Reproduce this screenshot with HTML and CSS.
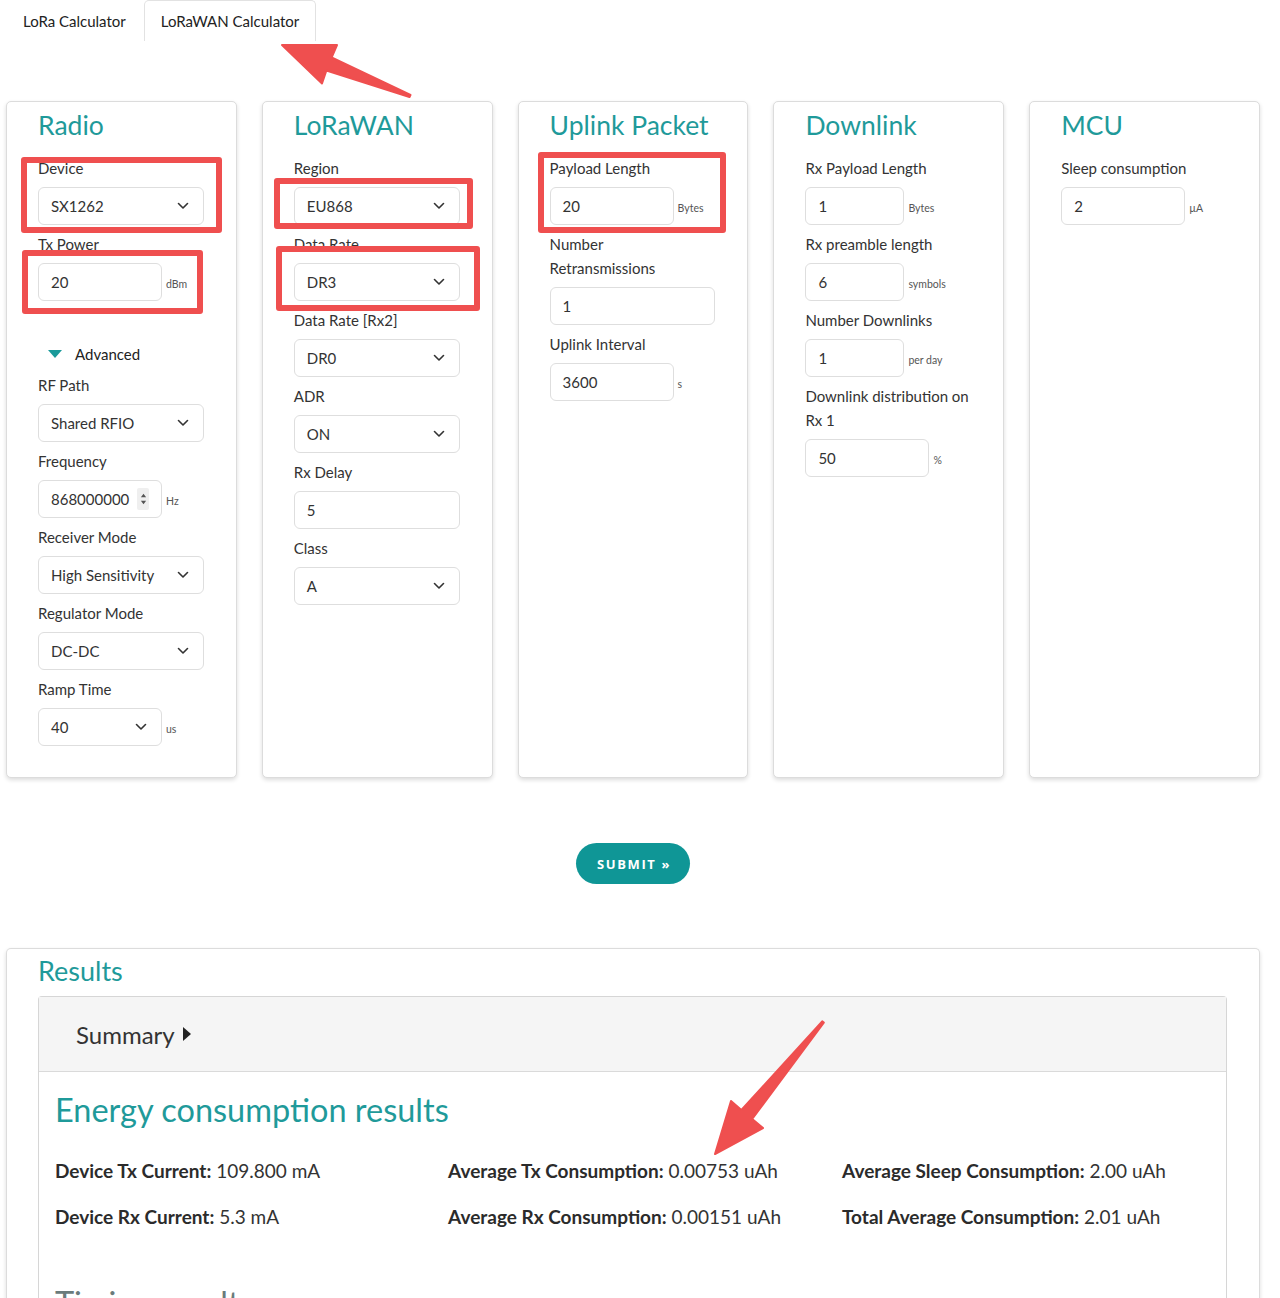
FILE: index.html
```html
<!DOCTYPE html>
<html lang="en">
<head>
<meta charset="utf-8">
<title>LoRaWAN Calculator</title>
<link rel="stylesheet" href="styles.css">
</head>
<body>
<div class="page">
  <nav class="tabs">
    <a class="tab">LoRa Calculator</a>
    <a class="tab active">LoRaWAN Calculator</a>
  </nav>

  <div class="cards">
    <section class="card">
      <h2 class="card-title">Radio</h2>
      <div class="field">
        <label>Device</label>
        <div class="select">SX1262<svg class="chev" viewBox="0 0 12 8"><path d="M1.5 1.5 6 6l4.5-4.5"/></svg></div>
      </div>
      <div class="field">
        <label>Tx Power</label>
        <div class="group"><div class="input w124">20</div><span class="unit">dBm</span></div>
      </div>
      <div class="advanced"><svg class="tri" viewBox="0 0 14 9"><path d="M0 0h14L7 8z"/></svg><span>Advanced</span></div>
      <div class="field">
        <label>RF Path</label>
        <div class="select">Shared RFIO<svg class="chev" viewBox="0 0 12 8"><path d="M1.5 1.5 6 6l4.5-4.5"/></svg></div>
      </div>
      <div class="field">
        <label>Frequency</label>
        <div class="group"><div class="input w124 spin-input">868000000<span class="spinner"><svg viewBox="0 0 8 16"><path d="M1 6l3-4 3 4zM1 10l3 4 3-4z"/></svg></span></div><span class="unit">Hz</span></div>
      </div>
      <div class="field">
        <label>Receiver Mode</label>
        <div class="select">High Sensitivity<svg class="chev" viewBox="0 0 12 8"><path d="M1.5 1.5 6 6l4.5-4.5"/></svg></div>
      </div>
      <div class="field">
        <label>Regulator Mode</label>
        <div class="select">DC-DC<svg class="chev" viewBox="0 0 12 8"><path d="M1.5 1.5 6 6l4.5-4.5"/></svg></div>
      </div>
      <div class="field last">
        <label>Ramp Time</label>
        <div class="group"><div class="select w124">40<svg class="chev" viewBox="0 0 12 8"><path d="M1.5 1.5 6 6l4.5-4.5"/></svg></div><span class="unit">us</span></div>
      </div>
    </section>

    <section class="card">
      <h2 class="card-title">LoRaWAN</h2>
      <div class="field">
        <label>Region</label>
        <div class="select">EU868<svg class="chev" viewBox="0 0 12 8"><path d="M1.5 1.5 6 6l4.5-4.5"/></svg></div>
      </div>
      <div class="field">
        <label>Data Rate</label>
        <div class="select">DR3<svg class="chev" viewBox="0 0 12 8"><path d="M1.5 1.5 6 6l4.5-4.5"/></svg></div>
      </div>
      <div class="field">
        <label>Data Rate [Rx2]</label>
        <div class="select">DR0<svg class="chev" viewBox="0 0 12 8"><path d="M1.5 1.5 6 6l4.5-4.5"/></svg></div>
      </div>
      <div class="field">
        <label>ADR</label>
        <div class="select">ON<svg class="chev" viewBox="0 0 12 8"><path d="M1.5 1.5 6 6l4.5-4.5"/></svg></div>
      </div>
      <div class="field">
        <label>Rx Delay</label>
        <div class="input">5</div>
      </div>
      <div class="field">
        <label>Class</label>
        <div class="select">A<svg class="chev" viewBox="0 0 12 8"><path d="M1.5 1.5 6 6l4.5-4.5"/></svg></div>
      </div>
    </section>

    <section class="card">
      <h2 class="card-title">Uplink Packet</h2>
      <div class="field">
        <label>Payload Length</label>
        <div class="group"><div class="input w124">20</div><span class="unit">Bytes</span></div>
      </div>
      <div class="field">
        <label>Number<br>Retransmissions</label>
        <div class="input">1</div>
      </div>
      <div class="field">
        <label>Uplink Interval</label>
        <div class="group"><div class="input w124">3600</div><span class="unit">s</span></div>
      </div>
    </section>

    <section class="card">
      <h2 class="card-title">Downlink</h2>
      <div class="field">
        <label>Rx Payload Length</label>
        <div class="group"><div class="input w99">1</div><span class="unit">Bytes</span></div>
      </div>
      <div class="field">
        <label>Rx preamble length</label>
        <div class="group"><div class="input w99">6</div><span class="unit">symbols</span></div>
      </div>
      <div class="field">
        <label>Number Downlinks</label>
        <div class="group"><div class="input w99">1</div><span class="unit">per day</span></div>
      </div>
      <div class="field">
        <label>Downlink distribution on<br>Rx 1</label>
        <div class="group"><div class="input w124">50</div><span class="unit">%</span></div>
      </div>
    </section>

    <section class="card">
      <h2 class="card-title">MCU</h2>
      <div class="field">
        <label>Sleep consumption</label>
        <div class="group"><div class="input w124">2</div><span class="unit">µA</span></div>
      </div>
    </section>
  </div>

  <div class="submit-row">
    <button class="submit">SUBMIT »</button>
  </div>

  <section class="card results">
    <h2 class="card-title">Results</h2>
    <div class="panel">
      <div class="panel-head">Summary <svg class="play" viewBox="0 0 8 14"><path d="M0 0l8 7-8 7z"/></svg></div>
      <div class="panel-body">
        <h3 class="sub-title">Energy consumption results</h3>
        <div class="stats">
          <p><b>Device Tx Current:</b> 109.800 mA</p>
          <p><b>Average Tx Consumption:</b> 0.00753 uAh</p>
          <p><b>Average Sleep Consumption:</b> 2.00 uAh</p>
          <p><b>Device Rx Current:</b> 5.3 mA</p>
          <p><b>Average Rx Consumption:</b> 0.00151 uAh</p>
          <p><b>Total Average Consumption:</b> 2.01 uAh</p>
        </div>
        <h3 class="sub-title next">Timing results</h3>
      </div>
    </div>
  </section>

  <div class="annotations">
    <div class="mark m1"></div>
    <div class="mark m2"></div>
    <div class="mark m3"></div>
    <div class="mark m4"></div>
    <div class="mark m5"></div>
    <svg class="arrows" viewBox="0 0 1280 1298">
      <polygon points="282,45 337,45 331.6,57.5 410.5,95 409.5,97 326.4,70.5 322,83.5"/>
      <polygon points="715,1154 731,1101 741.4,1110 822.2,1021.4 823.8,1022.6 752.2,1119 763,1128"/>
    </svg>
  </div>
</div>
</body>
</html>
```

FILE: styles.css
```css
* { box-sizing: border-box; }

html, body {
  margin: 0;
  padding: 0;
  background: #fff;
}

body {
  font-family: "Lato", "Noto Sans", "DejaVu Sans", sans-serif;
  color: #333;
  font-size: 15px;
}

.page {
  position: relative;
  width: 1280px;
  padding: 0 20px 0 6px;
}

/* Tabs */
.tabs {
  display: flex;
  gap: 1px;
  height: 41px;
}

.tab {
  display: block;
  padding: 8px 16px 9px;
  line-height: 24px;
  font-size: 15px;
  color: #222;
  border: 1px solid transparent;
  border-bottom: 0;
  border-radius: 5px 5px 0 0;
}

.tab.active {
  border-color: #e2e2e2;
  background: #fff;
}

/* Cards */
.cards {
  margin-top: 60px;
  display: grid;
  grid-template-columns: repeat(5, 1fr);
  gap: 25px;
}

.card {
  border: 1px solid #dcdcdc;
  border-radius: 5px;
  box-shadow: 0 2px 4px rgba(0, 0, 0, 0.14);
  padding: 6px 32px 31px 31px;
  background: #fff;
}

.card-title {
  margin: 0 0 14px;
  font-size: 26.5px;
  line-height: 34px;
  font-weight: 400;
  color: #1f9a9a;
  white-space: nowrap;
}

.field {
  margin-bottom: 7px;
}

.field.last { margin-bottom: 0; }

.field label {
  display: block;
  line-height: 24px;
  margin-bottom: 7px;
  font-size: 15px;
  color: #333;
  white-space: nowrap;
}

.select, .input {
  position: relative;
  display: flex;
  align-items: center;
  height: 38px;
  padding: 0 12px;
  border: 1px solid #dedede;
  border-radius: 6px;
  background: #fff;
  font-size: 15px;
  color: #333;
}

.select {
  justify-content: space-between;
  padding-right: 14px;
}

.chev {
  width: 12px;
  height: 8px;
  fill: none;
  stroke: #333;
  stroke-width: 1.6;
  stroke-linecap: round;
  stroke-linejoin: round;
}

.group {
  display: flex;
  align-items: center;
  gap: 4px;
}

.w124 { width: 124px; flex: none; }
.w99 { width: 99px; flex: none; }

.unit {
  font-size: 10.5px;
  color: #555;
  padding-top: 4px;
}

.spin-input {
  justify-content: space-between;
  padding-right: 12px;
}

.spinner {
  display: flex;
  align-items: center;
  justify-content: center;
  width: 12px;
  height: 22px;
  background: #efefef;
  border-radius: 2px;
}

.spinner svg {
  width: 7px;
  height: 14px;
  fill: #555;
}

.advanced {
  display: flex;
  align-items: center;
  margin: 41px 0 7px;
  padding-left: 10px;
  line-height: 24px;
  font-size: 15px;
  color: #222;
}

.tri {
  width: 14px;
  height: 9px;
  fill: #1a9a9a;
  margin-right: 13px;
}

/* Submit */
.submit-row {
  display: flex;
  justify-content: center;
  margin-top: 65px;
}

.submit {
  height: 41px;
  width: 114px;
  border: 0;
  border-radius: 21px;
  background: #0f9696;
  color: #fff;
  font-family: "Open Sans", "Lato", sans-serif;
  font-weight: 700;
  font-size: 13px;
  letter-spacing: 1.6px;
  padding: 0 0 0 2px;
}

/* Results */
.results {
  margin-top: 64px;
  padding: 5px 32px 0 31px;
  height: 400px;
  border-bottom: 0;
  border-radius: 5px 5px 0 0;
}

.results .card-title {
  font-size: 27px;
  margin-bottom: 8px;
}

.panel {
  border: 1px solid #d6d6d6;
  border-radius: 4px 4px 0 0;
  border-bottom: 0;
  height: 400px;
}

.panel-head {
  display: flex;
  align-items: center;
  height: 75px;
  padding-left: 37px;
  background: #f5f5f5;
  border-bottom: 1px solid #dadada;
  font-size: 24px;
  color: #333;
}

.play {
  width: 8px;
  height: 14px;
  fill: #222;
  margin-left: 8px;
}

.panel-body {
  padding: 18px 16px 0;
}

.sub-title {
  margin: 0;
  font-size: 32.5px;
  line-height: 40px;
  font-weight: 400;
  color: #1f9a9a;
}

.sub-title.next {
  margin-top: 54px;
  color: #6a7b7b;
}

.stats {
  margin-top: 29px;
  display: grid;
  grid-template-columns: 393px 394px 1fr;
  row-gap: 22px;
}

.stats p {
  margin: 0;
  font-size: 19px;
  line-height: 24px;
  color: #333;
  white-space: nowrap;
}

.stats b {
  font-weight: 700;
  color: #2b2b2b;
}

/* Annotation overlay (screenshot markup) */
.annotations {
  position: absolute;
  top: 0;
  left: 0;
  width: 1280px;
  height: 1298px;
  pointer-events: none;
}

.mark {
  position: absolute;
  border: 6px solid #ef4f4f;
  border-radius: 3px;
}

.m1 { left: 21px; top: 157px; width: 201px; height: 76px; }
.m2 { left: 22px; top: 250px; width: 181px; height: 64px; }
.m3 { left: 274px; top: 178px; width: 199px; height: 51px; }
.m4 { left: 276px; top: 246px; width: 204px; height: 65px; }
.m5 { left: 538px; top: 152px; width: 188px; height: 81px; }

.arrows {
  position: absolute;
  top: 0;
  left: 0;
  width: 1280px;
  height: 1298px;
}

.arrows polygon {
  fill: #ef4f4f;
  stroke: #ef4f4f;
  stroke-width: 2;
  stroke-linejoin: round;
}
```
